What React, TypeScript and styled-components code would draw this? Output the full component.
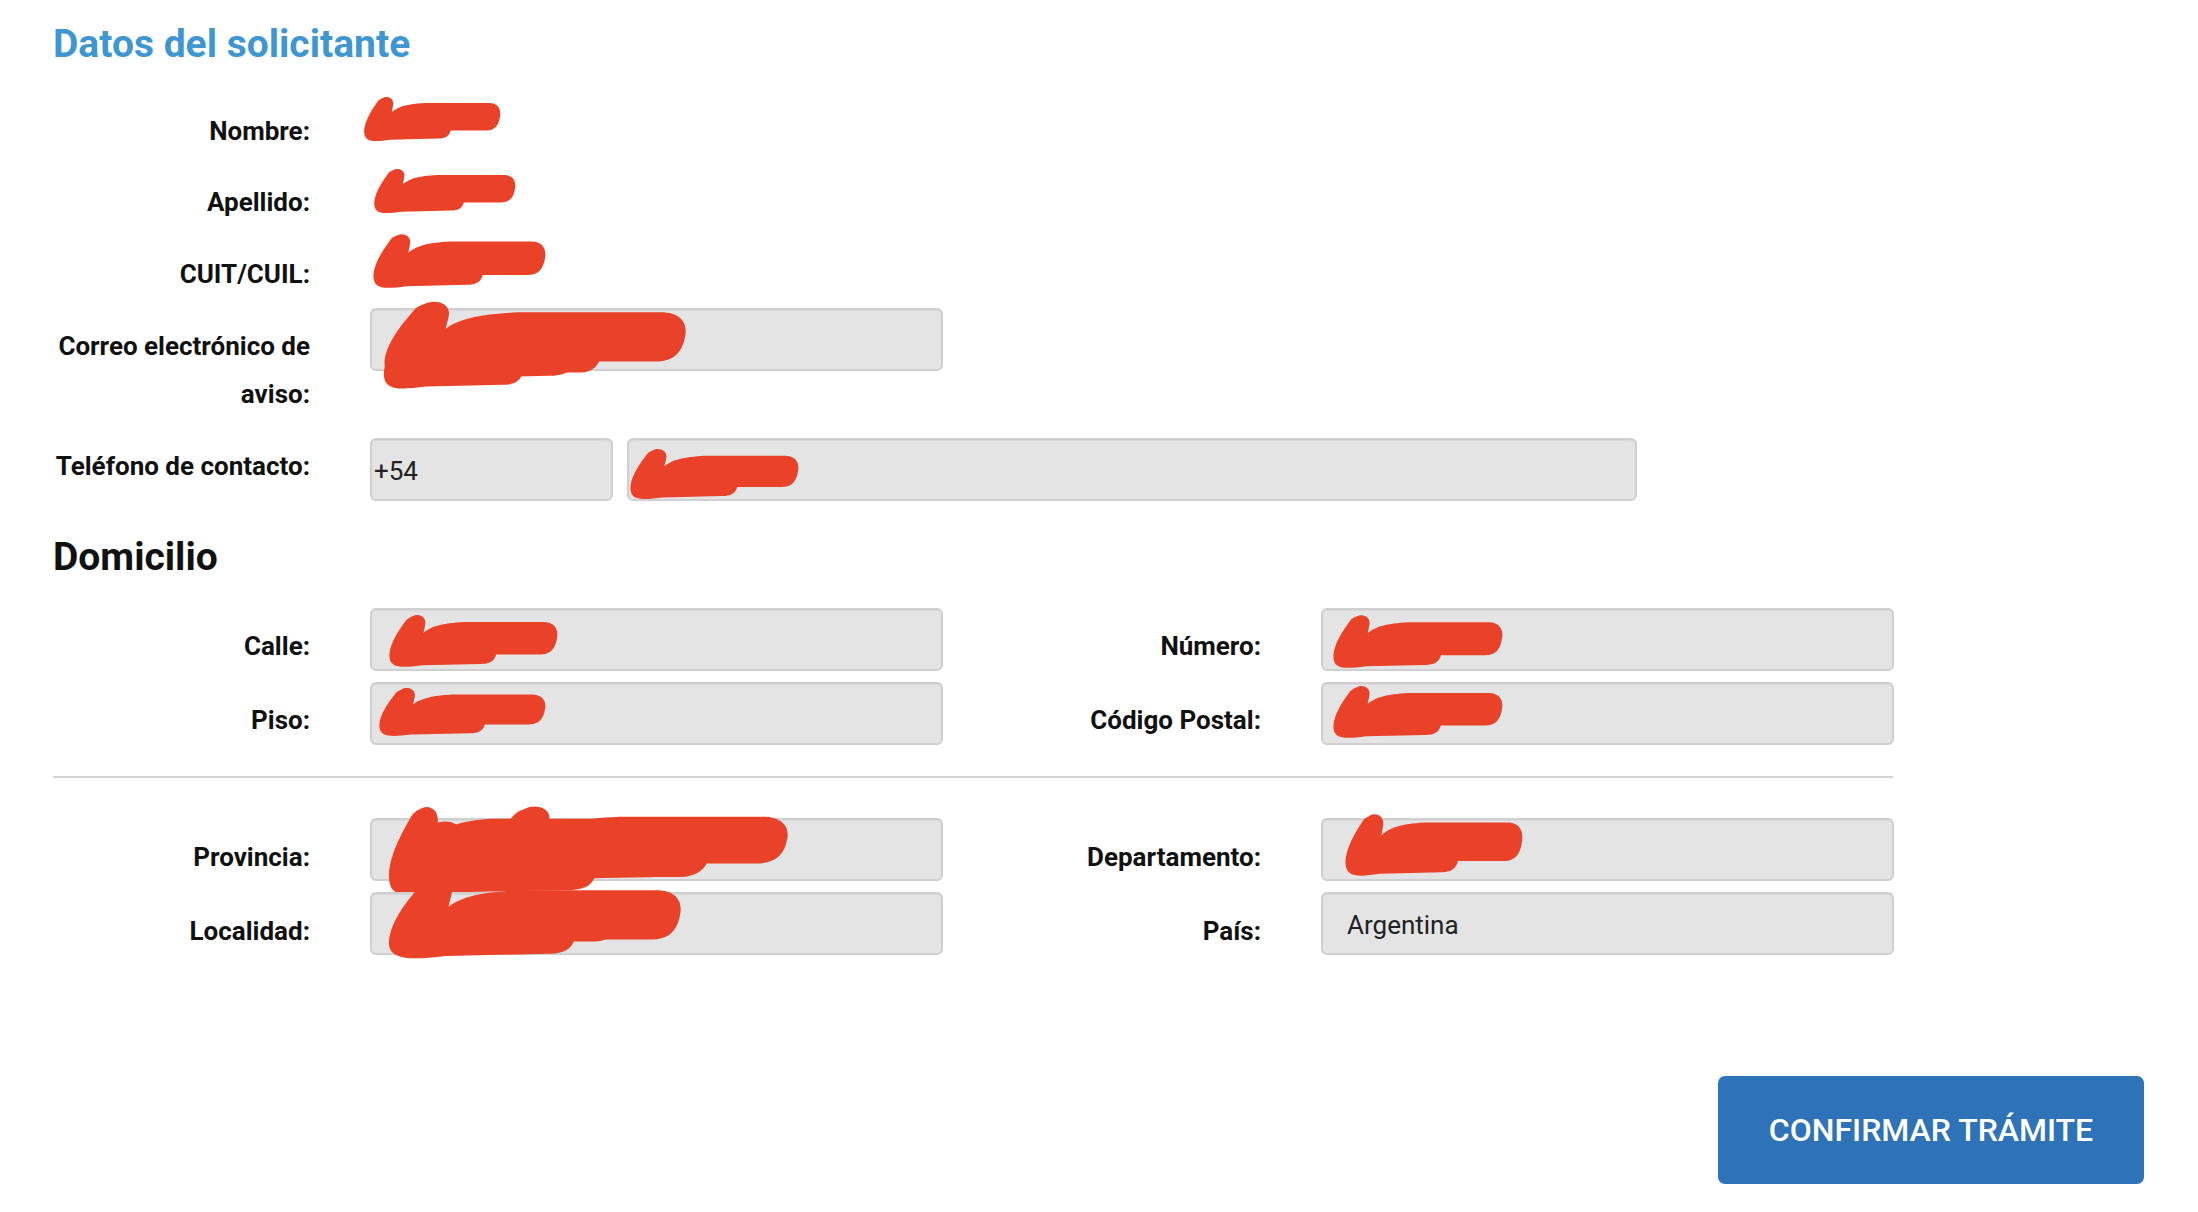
import React from "react";
import styled, { createGlobalStyle } from "styled-components";

const GlobalStyle = createGlobalStyle`
  html, body {
    margin: 0;
    padding: 0;
    background: #ffffff;
  }
  body {
    font-family: Roboto, "Liberation Sans", Arial, sans-serif;
    color: #111111;
  }
  * {
    box-sizing: border-box;
  }
`;

type Mark = { x: number; y: number; w: number; h: number };

// the red marker scribbles that hide personal data
const SCRIBBLE =
  "M14 2 C18 -1 23 2 22 8 L21 14 C26 9 32 7 45 6 L92 6 C99 6 101 12 100 18 C99 26 96 30 90 30 L64 30 C63 35 60 37 55 37 L20 38 C8 40 2 40 1 33 C0 26 4 16 10 6 C11 4 12 3 14 2 Z";

const Redact = ({ marks }: { marks: Mark[] }) => (
  <>
    {marks.map((m, i) => (
      <Scribble
        key={i}
        $x={m.x}
        $y={m.y}
        $w={m.w}
        $h={m.h}
        viewBox="0 0 100 40"
        preserveAspectRatio="none"
      >
        <path d={SCRIBBLE} fill="#ea4228" />
      </Scribble>
    ))}
  </>
);

const App = () => {
  return (
    <Page>
      <GlobalStyle />
      <Title>Datos del solicitante</Title>

      <InfoList>
        <InfoRow $mt={41}>
          <Label>Nombre:</Label>
          <ValueCell>
            <Redact marks={[{ x: -7, y: -11, w: 137, h: 46 }]} />
          </ValueCell>
        </InfoRow>
        <InfoRow $mt={23}>
          <Label>Apellido:</Label>
          <ValueCell>
            <Redact marks={[{ x: 3, y: -10, w: 142, h: 46 }]} />
          </ValueCell>
        </InfoRow>
        <InfoRow $mt={24}>
          <Label>CUIT/CUIL:</Label>
          <ValueCell>
            <Redact marks={[{ x: 2, y: -17, w: 173, h: 56 }]} />
          </ValueCell>
        </InfoRow>
        <InfoRow $mt={10}>
          <Label $pt={14}>
            Correo electrónico de
            <br />
            aviso:
          </Label>
          <Field $w={573} $pad={24}>
            <Redact
              marks={[
                { x: 10, y: -10, w: 303, h: 82 },
                { x: 10, y: 10, w: 220, h: 70 },
              ]}
            />
          </Field>
        </InfoRow>
        <InfoRow $mt={20}>
          <Label $pt={4}>Teléfono de contacto:</Label>
          <PhoneGroup>
            <Field $w={243} $pad={2}>
              +54
            </Field>
            <Field $w={1010} $pad={4}>
              <Redact marks={[{ x: 0, y: 8, w: 169, h: 52 }]} />
            </Field>
          </PhoneGroup>
        </InfoRow>
      </InfoList>

      <Heading>Domicilio</Heading>

      <AddressGrid $mt={29}>
        <Label $pt={14}>Calle:</Label>
        <Field $w={573} $pad={24}>
          <Redact marks={[{ x: 16, y: 4, w: 169, h: 54 }]} />
        </Field>
        <Label $pt={14}>Número:</Label>
        <Field $w={573} $pad={24}>
          <Redact marks={[{ x: 9, y: 4, w: 170, h: 55 }]} />
        </Field>
        <Label $pt={14}>Piso:</Label>
        <Field $w={573} $pad={24}>
          <Redact marks={[{ x: 6, y: 3, w: 167, h: 50 }]} />
        </Field>
        <Label $pt={14}>Código Postal:</Label>
        <Field $w={573} $pad={24}>
          <Redact marks={[{ x: 9, y: 1, w: 170, h: 54 }]} />
        </Field>
      </AddressGrid>

      <Divider />

      <AddressGrid $mt={0}>
        <Label $pt={15}>Provincia:</Label>
        <Field $w={573} $pad={24}>
          <Redact
            marks={[
              { x: 15, y: -15, w: 230, h: 92 },
              { x: 110, y: -15, w: 305, h: 78 },
              { x: 18, y: 0, w: 320, h: 76 },
            ]}
          />
        </Field>
        <Label $pt={15}>Departamento:</Label>
        <Field $w={573} $pad={24}>
          <Redact marks={[{ x: 21, y: -7, w: 178, h: 64 }]} />
        </Field>
        <Label $pt={15}>Localidad:</Label>
        <Field $w={573} $pad={24} $z={2}>
          <Redact
            marks={[
              { x: 15, y: -16, w: 293, h: 82 },
              { x: 15, y: -2, w: 230, h: 66 },
            ]}
          />
        </Field>
        <Label $pt={15}>País:</Label>
        <Field $w={573} $pad={24}>
          Argentina
        </Field>
      </AddressGrid>

      <Footer>
        <ConfirmButton>CONFIRMAR TRÁMITE</ConfirmButton>
      </Footer>
    </Page>
  );
};

export default App;

const Page = styled.div`
  width: 100%;
  min-height: 1212px;
  padding: 22px 54px 28px 53px;
  background: #ffffff;
`;

const Title = styled.h2`
  margin: 0;
  font-size: 39px;
  line-height: 44px;
  font-weight: 700;
  color: #3f97d2;
`;

const InfoList = styled.div`
  display: flex;
  flex-direction: column;
`;

const InfoRow = styled.div<{ $mt: number }>`
  display: grid;
  grid-template-columns: 257px 1fr;
  column-gap: 60px;
  align-items: start;
  margin-top: ${(p) => p.$mt}px;
`;

const Label = styled.div<{ $pt?: number }>`
  padding-top: ${(p) => p.$pt || 0}px;
  text-align: right;
  font-size: 26px;
  line-height: 48px;
  font-weight: 700;
  color: #111111;
`;

const ValueCell = styled.div`
  position: relative;
  height: 48px;
  font-size: 26px;
  line-height: 48px;
  color: #222222;
`;

const Field = styled.div<{ $w: number; $pad: number; $z?: number }>`
  position: relative;
  z-index: ${(p) => p.$z || 1};
  display: flex;
  align-items: center;
  width: ${(p) => p.$w}px;
  height: 63px;
  padding-left: ${(p) => p.$pad}px;
  padding-top: 2px;
  background: #e4e4e4;
  border: 2px solid #cfcfcf;
  border-radius: 6px;
  box-shadow: inset 0 1px 1px rgba(0, 0, 0, 0.05);
  font-size: 26px;
  font-weight: 400;
  color: #222222;
`;

const PhoneGroup = styled.div`
  display: flex;
  gap: 14px;
`;

const Scribble = styled.svg<{ $x: number; $y: number; $w: number; $h: number }>`
  position: absolute;
  left: ${(p) => p.$x}px;
  top: ${(p) => p.$y}px;
  width: ${(p) => p.$w}px;
  height: ${(p) => p.$h}px;
  overflow: visible;
  pointer-events: none;
`;

const Heading = styled.h3`
  margin: 34px 0 0;
  font-size: 39px;
  line-height: 44px;
  font-weight: 700;
  color: #111111;
`;

const AddressGrid = styled.div<{ $mt: number }>`
  display: grid;
  grid-template-columns: 257px 573px 258px 573px;
  column-gap: 60px;
  row-gap: 11px;
  align-items: start;
  margin-top: ${(p) => p.$mt}px;
`;

const Divider = styled.hr`
  width: 1840px;
  height: 2px;
  margin: 31px 0 40px;
  border: 0;
  background: #d2d2d2;
`;

const Footer = styled.div`
  display: flex;
  justify-content: flex-end;
  margin-top: 121px;
`;

const ConfirmButton = styled.button`
  width: 426px;
  height: 108px;
  border: 0;
  border-radius: 7px;
  background: #2e72b7;
  color: #ffffff;
  font-family: Roboto, "Liberation Sans", Arial, sans-serif;
  font-size: 32px;
  font-weight: 500;
  cursor: pointer;
`;
